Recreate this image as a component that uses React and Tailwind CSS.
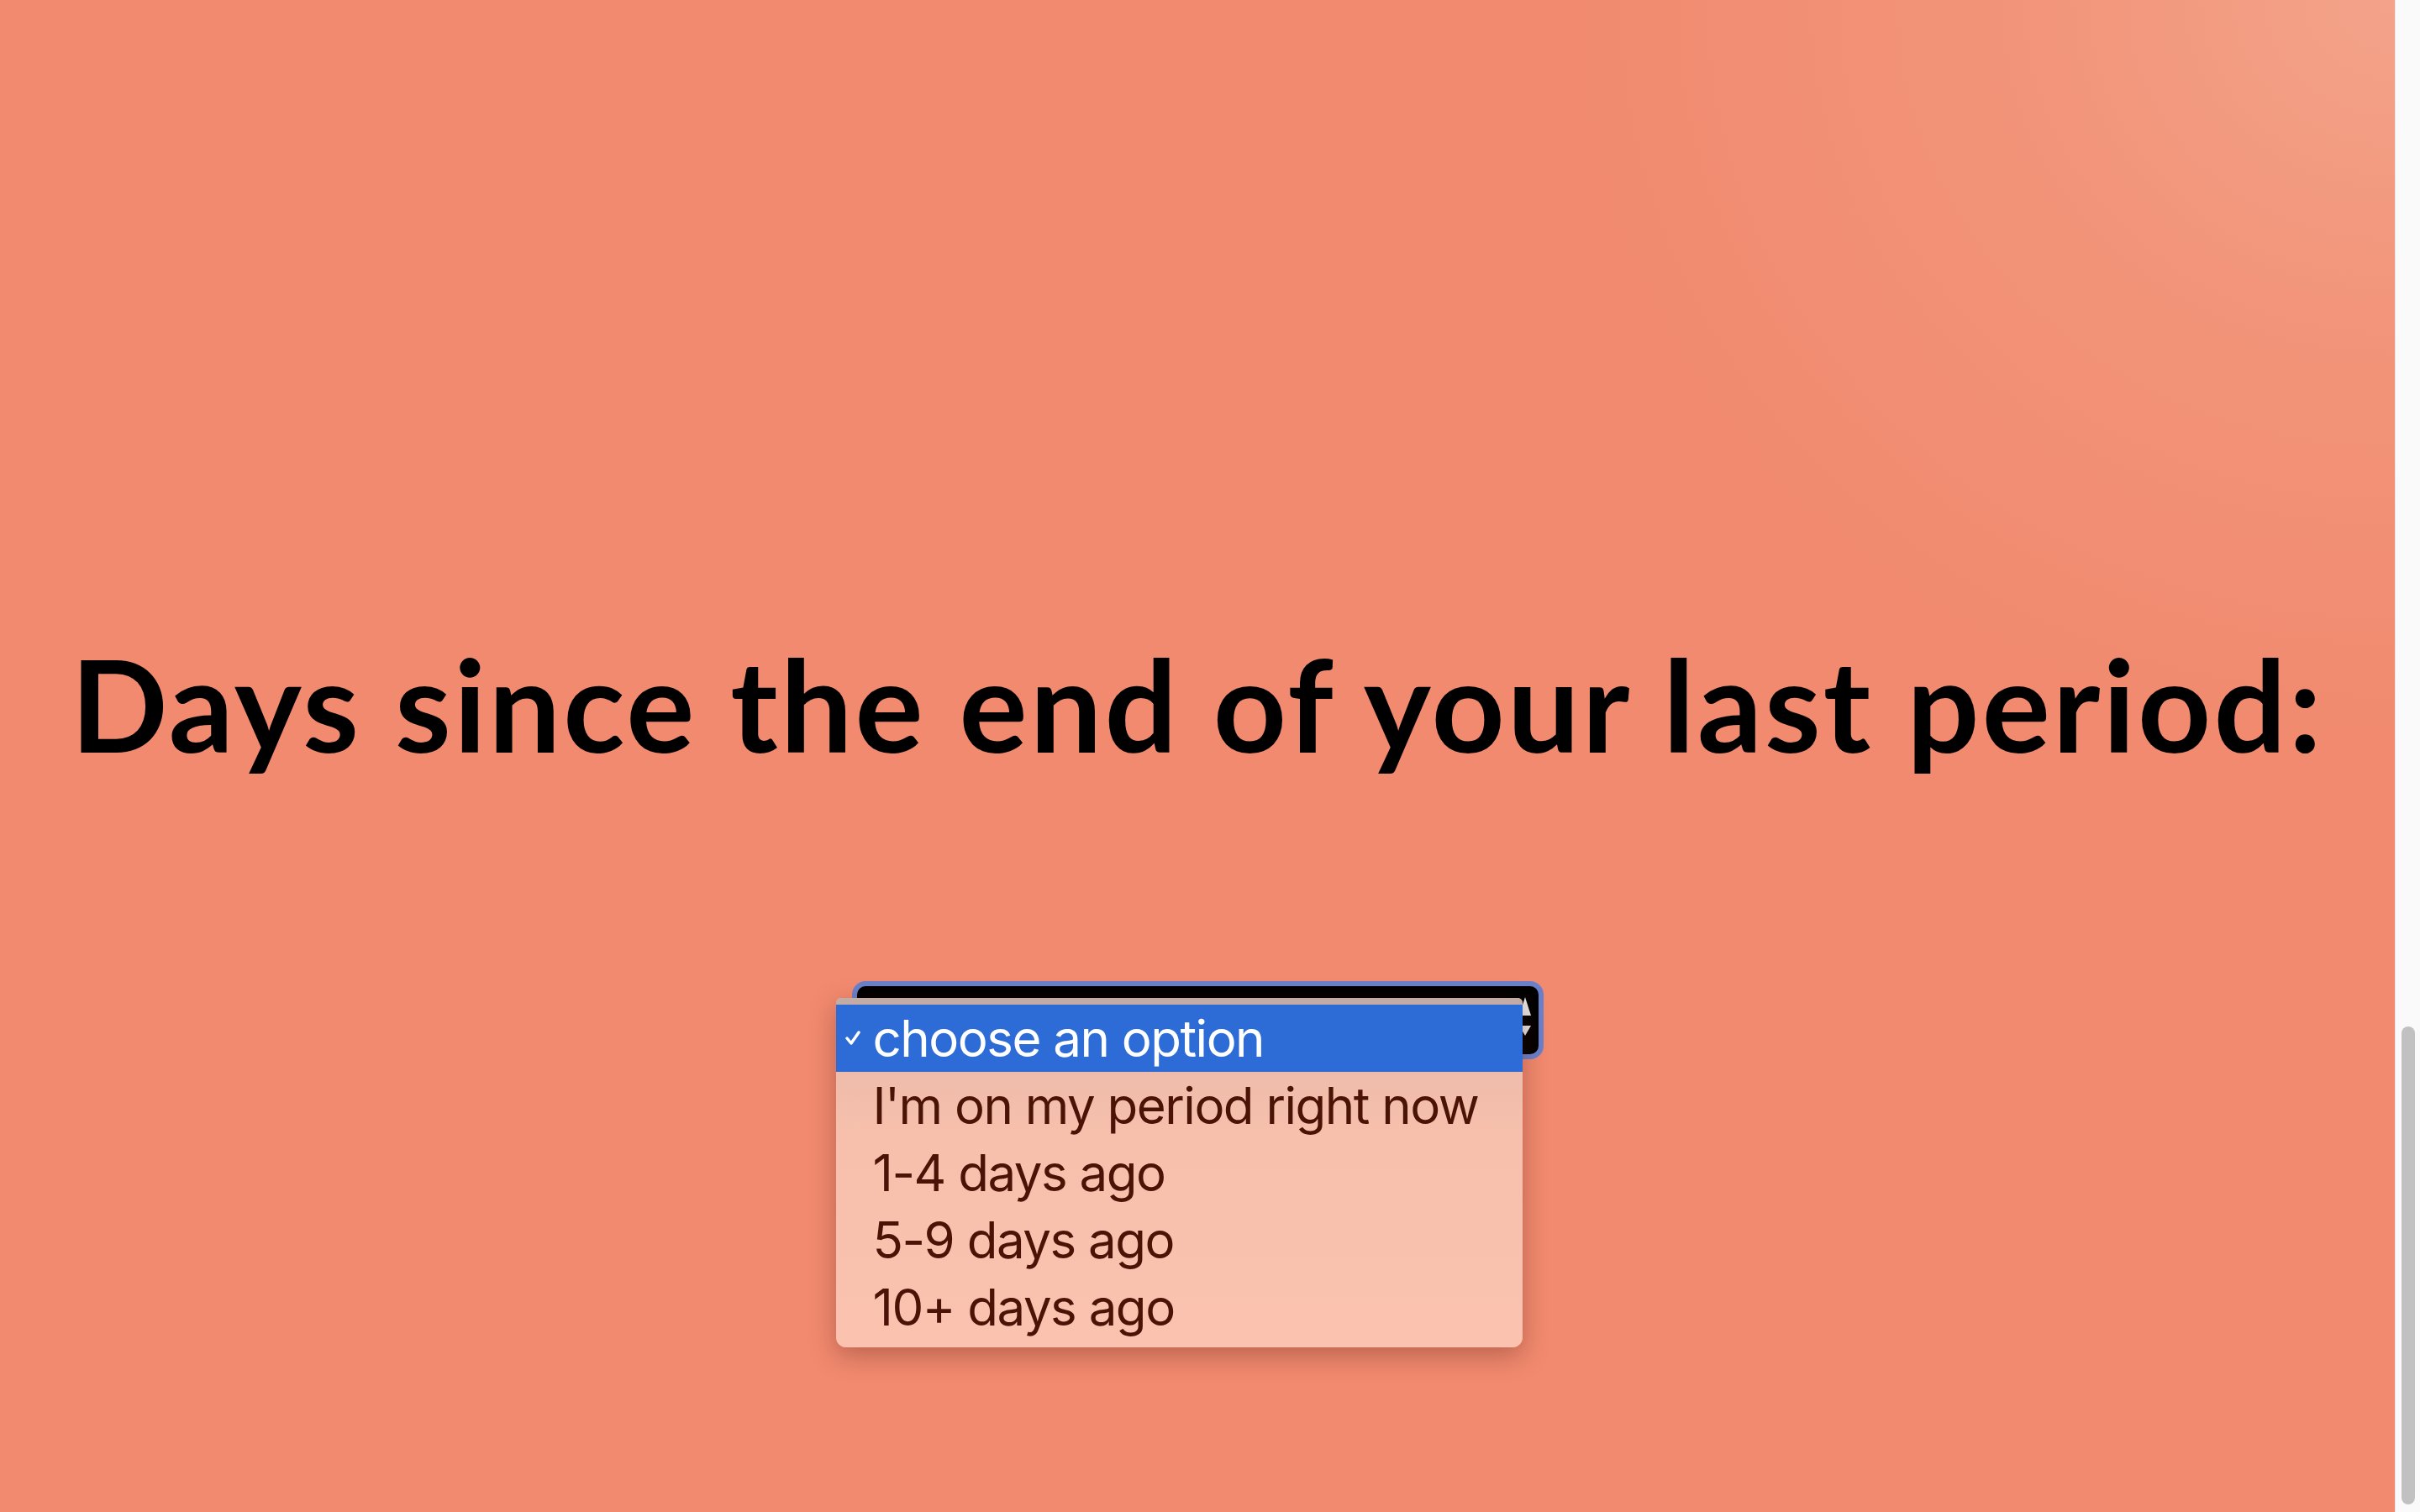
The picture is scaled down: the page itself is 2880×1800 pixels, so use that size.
const options = [
  "I'm on my period right now",
  "1-4 days ago",
  "5-9 days ago",
  "10+ days ago",
];

export default function App() {
  return (
    <div className="flex h-screen w-full overflow-hidden">
      {/* Page */}
      <main className="flex-1 flex flex-col items-center bg-[#f18a6f] bg-[radial-gradient(ellipse_1000px_900px_at_100%_0%,#f3a38a_0%,#f29479_45%,#f18a6f_100%)]">
        <h1 className="pt-[761px] text-[152px] leading-none font-bold tracking-[3px] text-black font-['Lato',sans-serif] whitespace-nowrap">
          Days since the end of your last period:
        </h1>

        {/* Select, opened */}
        <div className="relative mt-[261px] w-[811px] h-[81px] rounded-[10px] bg-black ring-[6px] ring-[#5b7fd4]/90">
          <svg className="absolute right-[9px] top-[13px]" width="14" height="46" viewBox="0 0 14 46">
            <path d="M7 0 L14 22 L0 22 Z" fill="#e6e6e6" />
            <path d="M0 34 L14 34 L7 46 Z" fill="#e6e6e6" />
          </svg>

          <div className="absolute left-[-25px] top-[14px] w-[817px] rounded-t-[6px] rounded-b-[12px] overflow-hidden shadow-[0_10px_30px_rgba(90,30,20,0.35)] bg-[linear-gradient(to_bottom,#e8b7aa,#f6c0ac_40%,#fbc3af)] font-['Inter',sans-serif]">
            <div className="h-[8px] bg-[#c4aca6]" />
            <div className="flex items-center h-[80px] bg-[#2d6cd6] text-white text-[60px] leading-none tracking-[-1.5px]">
              <div className="w-[44px] flex justify-start pl-[10px]">
                <svg width="20" height="18" viewBox="0 0 20 18">
                  <path d="M3 9 L8 15 L17 2" fill="none" stroke="white" strokeWidth="3.5" strokeLinecap="round" strokeLinejoin="round" />
                </svg>
              </div>
              <span>choose an option</span>
            </div>
            {options.map((o) => (
              <div key={o} className="flex items-center h-[80px] pl-[44px] text-[60px] leading-none text-[#4b1306] tracking-[-1.5px]">
                {o}
              </div>
            ))}
            <div className="h-[8px]" />
          </div>
        </div>
      </main>

      {/* Scrollbar */}
      <div className="w-[30px] h-full flex flex-col justify-end border-l border-[#e6e6e6] bg-[#fafafa]">
        <div className="ml-[7px] mb-[9px] w-[16px] h-[569px] rounded-full bg-[#c1c1c1]" />
      </div>
    </div>
  );
}
